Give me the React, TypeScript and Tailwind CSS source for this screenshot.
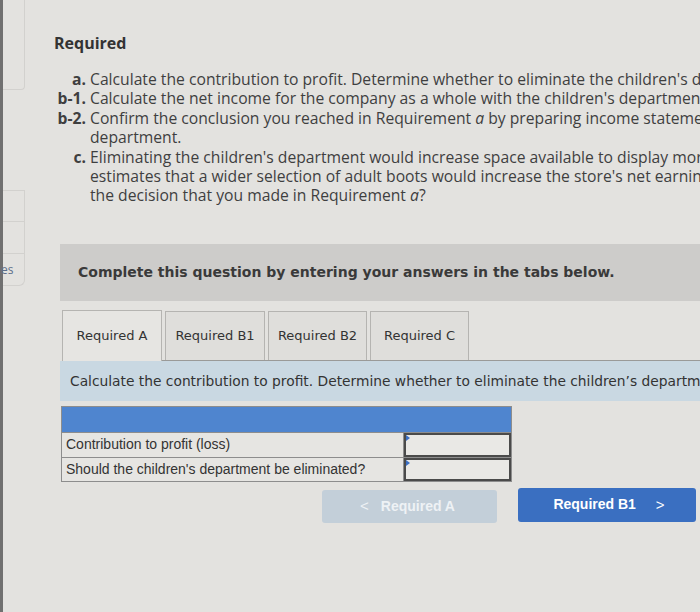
import React from "react";

const lines: { label?: string; text: React.ReactNode }[] = [
  { label: "a.", text: "Calculate the contribution to profit. Determine whether to eliminate the children's department." },
  { label: "b-1.", text: "Calculate the net income for the company as a whole with the children's department and without it." },
  { label: "b-2.", text: <>Confirm the conclusion you reached in Requirement <i>a</i> by preparing income statements for the</> },
  { text: "department." },
  { label: "c.", text: "Eliminating the children's department would increase space available to display more" },
  { text: "estimates that a wider selection of adult boots would increase the store's net earnings" },
  { text: <>the decision that you made in Requirement <i>a</i>?</> },
];

export default function App() {
  return (
    <div className="w-[700px] h-[612px] bg-[#e3e2df] flex overflow-hidden text-[#3c3c3c]">
      {/* left edge / sidebar */}
      <div className="w-[3px] h-full bg-[#707070] shrink-0" />
      <div className="w-[22px] shrink-0 flex flex-col">
        <div className="h-[90px] border-b border-r border-[#d2d1ce] rounded-br-sm" />
        <div className="h-[100px]" />
        <div className="h-[32px] border-y border-r border-[#d2d1ce]" />
        <div className="h-[32px] border-b border-r border-[#d2d1ce]" />
        <div className="h-[32px] border-b border-r border-[#d2d1ce] rounded-br-md flex items-center">
          <span className="text-[12px] text-[#5d6f8a] font-['Open_Sans',sans-serif] -ml-[2px]">es</span>
        </div>
      </div>

      {/* main */}
      <div className="flex-1 min-w-0 flex flex-col">
        <div className="pl-[29px] pt-[32px] font-['Open_Sans',sans-serif] whitespace-nowrap overflow-hidden">
          <div className="text-[16px] font-bold leading-[22px] text-[#333]">Required</div>
          <div className="mt-[16px] text-[15.7px] leading-[19.4px] text-[#3f3f3f]">
            {lines.map((l, i) => (
              <div key={i} className="flex">
                <span className="w-[36px] shrink-0 text-right font-bold pr-[4px]">{l.label ?? ""}</span>
                <span>{l.text}</span>
              </div>
            ))}
          </div>
        </div>

        <div className="pl-[35px] mt-[38px]">
          {/* banner */}
          <div className="h-[57px] bg-[#cdccca] flex items-center pl-[18px] font-['DejaVu_Sans',sans-serif] font-bold text-[14px] text-[#3a3a3a] whitespace-nowrap">
            Complete this question by entering your answers in the tabs below.
          </div>

          {/* tabs */}
          <div className="mt-[9px] flex items-end font-['DejaVu_Sans',sans-serif] text-[13px] text-[#333] whitespace-nowrap">
            <div className="w-[2px]" />
            <div className="w-[100px] h-[51px] border border-b-0 border-[#b5b4b1] bg-[#e6e5e2] flex items-center justify-center">Required A</div>
            <div className="flex-1 flex items-end gap-[3px] pl-[3px] border-b border-[#9a9a98]">
              <div className="w-[100px] h-[49px] border border-b-0 border-[#b5b4b1] bg-[#dfdedb] flex items-center justify-center">Required B1</div>
              <div className="w-[99px] h-[49px] border border-b-0 border-[#b5b4b1] bg-[#dfdedb] flex items-center justify-center">Required B2</div>
              <div className="w-[99px] h-[49px] border border-b-0 border-[#b5b4b1] bg-[#dfdedb] flex items-center justify-center">Required C</div>
            </div>
          </div>

          {/* info bar */}
          <div className="h-[40px] bg-[#c9d8e2] flex items-center pl-[10px] font-['DejaVu_Sans',sans-serif] text-[13.8px] text-[#333] whitespace-nowrap overflow-hidden">
            Calculate the contribution to profit. Determine whether to eliminate the children’s department.
          </div>

          {/* table */}
          <div className="mt-[5px] ml-[1px] w-[451px] border border-[#8d8d8d] font-['Liberation_Sans',Arial,sans-serif] text-[14px] text-[#333]">
            <div className="h-[25px] bg-[#4f85cf]" />
            <div className="flex h-[25px] border-t border-[#8d8d8d] bg-[#e6e5e2]">
              <div className="w-[342px] border-r border-[#8d8d8d] flex items-center pl-[4px]">Contribution to profit (loss)</div>
              <div className="flex-1 relative border-2 border-[#4a4a4a] bg-[#e9e8e5]">
                <span className="absolute left-0 top-0 w-0 h-0 border-y-[3px] border-y-transparent border-l-[4px] border-l-[#3b6fc4]" />
              </div>
            </div>
            <div className="flex h-[24px] border-t border-[#8d8d8d] bg-[#e6e5e2]">
              <div className="w-[342px] border-r border-[#8d8d8d] flex items-center pl-[4px]">Should the children's department be eliminated?</div>
              <div className="flex-1 relative border-2 border-[#4a4a4a] bg-[#e9e8e5]">
                <span className="absolute left-0 top-0 w-0 h-0 border-y-[3px] border-y-transparent border-l-[4px] border-l-[#3b6fc4]" />
              </div>
            </div>
          </div>

          {/* nav buttons */}
          <div className="mt-[6px] flex items-start font-['Liberation_Sans',Arial,sans-serif] font-bold text-[14px]">
            <div className="ml-[262px] mt-[2px] w-[175px] h-[33px] rounded-[3px] bg-[#c3cfd9] text-[#eef2f5] flex items-center justify-center gap-[12px] pr-[4px]">
              <span className="font-normal text-[15px]">&lt;</span>
              <span>Required A</span>
            </div>
            <div className="ml-[21px] w-[178px] h-[34px] rounded-[3px] bg-[#3a6fc1] text-white flex items-center justify-center gap-[20px] pl-[4px]">
              <span>Required B1</span>
              <span className="font-normal text-[15px]">&gt;</span>
            </div>
          </div>
        </div>
      </div>
    </div>
  );
}
